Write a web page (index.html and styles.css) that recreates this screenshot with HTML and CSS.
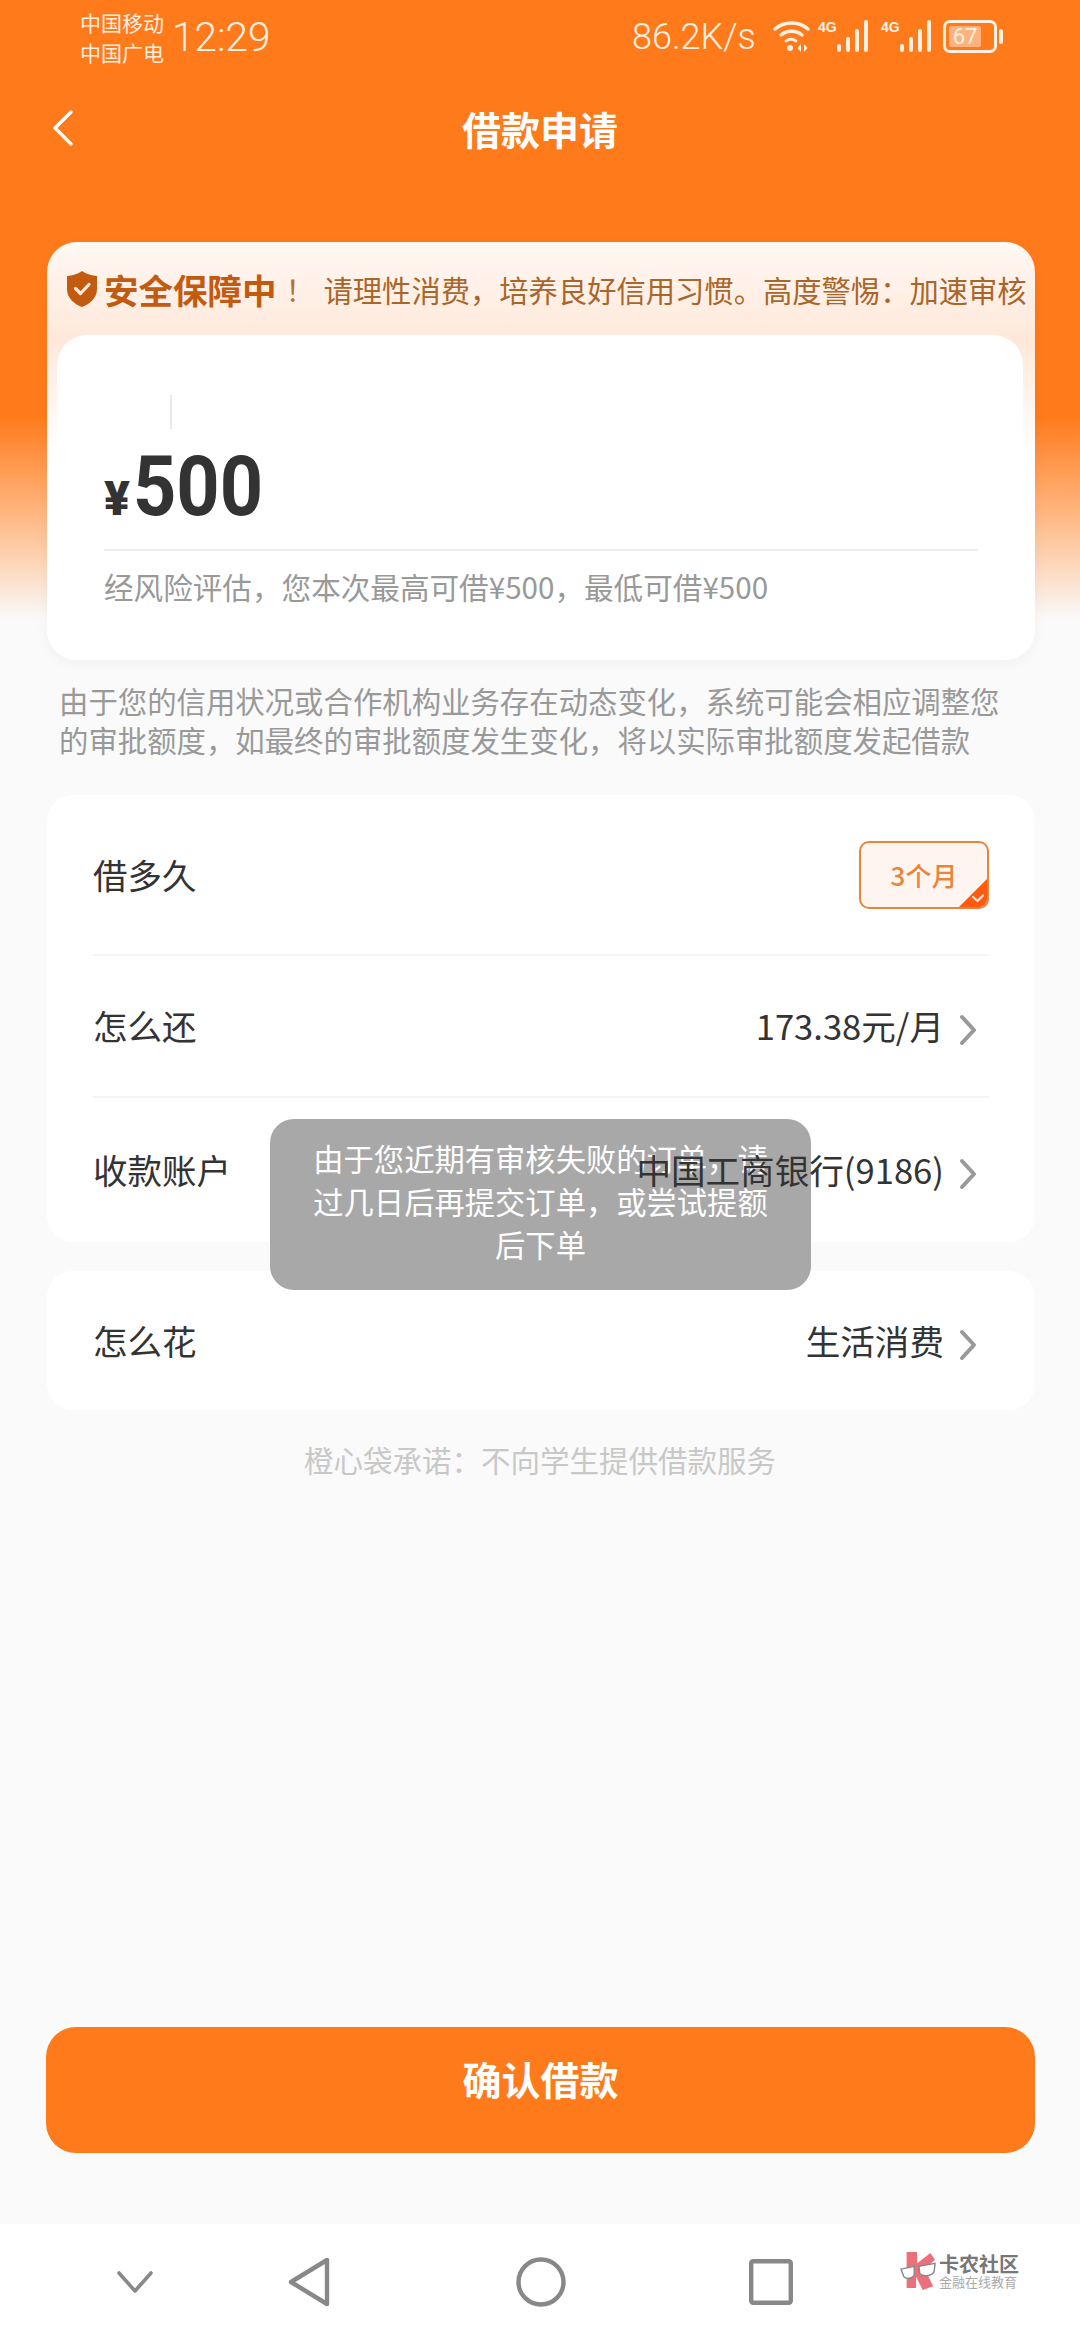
FILE: index.html
```html
<!DOCTYPE html>
<html lang="zh">
<head>
<meta charset="utf-8">
<title>借款申请</title>
<link rel="stylesheet" href="styles.css">
</head>
<body>
<div class="page">
  <div class="status">
    <div class="carrier"><span>中国移动</span><span>中国广电</span></div>
    <div class="time">12:29</div>
    <div class="speed">86.2K/s</div>
    <svg class="wifi" width="37" height="32" viewBox="0 0 37 32" fill="none" stroke="#fff0e2" stroke-linecap="round">
      <path d="M2 9C11 1 26 1 35 9" stroke-width="3.4"/>
      <path d="M8 15C14 10 23 10 29 15" stroke-width="3.4"/>
      <path d="M13 21C16 19 20 19 23 21" stroke-width="3"/>
      <circle cx="17" cy="28" r="3" fill="#fff0e2" stroke="none"/>
      <path d="M28 24L24.5 28L28 32ZM31 24L34.500 28L31 32Z" fill="#fff0e2" stroke="none"/>
    </svg>
    <div class="signal first">
      <span class="net">4G</span>
      <svg width="32" height="33" viewBox="0 0 32 33" fill="#fff0e2"><rect x="0" y="24" width="4" height="8" rx="2"/><rect x="9" y="17" width="4" height="15" rx="2"/><rect x="18" y="9" width="4" height="23" rx="2"/><rect x="27" y="0" width="4" height="32" rx="2"/></svg>
    </div>
    <div class="signal second">
      <span class="net">4G</span>
      <svg width="32" height="33" viewBox="0 0 32 33" fill="#fff0e2"><rect x="0" y="24" width="4" height="8" rx="2"/><rect x="9" y="17" width="4" height="15" rx="2"/><rect x="18" y="9" width="4" height="23" rx="2"/><rect x="27" y="0" width="4" height="32" rx="2"/></svg>
    </div>
    <div class="battery"><div class="cell"><span class="level">67</span></div><div class="nub"></div></div>
  </div>

  <div class="topbar">
    <svg class="back" width="22" height="36" viewBox="0 0 22 36" fill="none" stroke="#fff" stroke-width="3.2" stroke-linecap="round" stroke-linejoin="round"><path d="M19 2L3 18L19 34"/></svg>
    <div class="title">借款申请</div>
  </div>

  <div class="amount-card">
    <div class="banner">
      <svg class="shield" width="32" height="36" viewBox="0 0 32 36"><path d="M16 0C20 3 26 4.500 31 5V18C31 27 24 33 16 36C8 33 1 27 1 18V5C6 4.500 12 3 16 0Z" fill="#c25a10"/><path d="M9.500 17.500L14.500 22.500L23 13.500" fill="none" stroke="#ffe9dc" stroke-width="3.200" stroke-linecap="round" stroke-linejoin="round"/></svg>
      <span class="safe">安全保障中</span>
      <span class="bang">！</span>
      <span class="notice">请理性消费，培养良好信用习惯。高度警惕：加速审核</span>
    </div>
    <div class="amount-inner">
      <div class="cursor"></div>
      <div class="amount"><span class="yen">¥</span><span class="num">500</span></div>
      <div class="hint">经风险评估，您本次最高可借¥500，最低可借¥500</div>
    </div>
  </div>

  <p class="desc">由于您的信用状况或合作机构业务存在动态变化，系统可能会相应调整您的审批额度，如最终的审批额度发生变化，将以实际审批额度发起借款</p>

  <div class="stage">
    <div class="card rows">
      <div class="row r1">
        <span class="label">借多久</span>
        <div class="term">3个月
          <svg class="tick" width="30" height="30" viewBox="0 0 30 30"><path d="M30 0V20C30 26 26 30 20 30H0Z" fill="#ff5a10"/><path d="M15 19L19.500 23L25 17.500" fill="none" stroke="#ffe9dc" stroke-width="2.200" stroke-linecap="round" stroke-linejoin="round"/></svg>
        </div>
      </div>
      <div class="row r2">
        <span class="label">怎么还</span>
        <div class="value"><span>173.38元/月</span><svg class="chev" width="18" height="32" viewBox="0 0 18 32" fill="none" stroke="#999" stroke-width="4" stroke-linecap="round" stroke-linejoin="round"><path d="M3 3L15 16L3 29"/></svg></div>
      </div>
      <div class="row r3">
        <span class="label">收款账户</span>
        <div class="value"><span>中国工商银行(9186)</span><svg class="chev" width="18" height="32" viewBox="0 0 18 32" fill="none" stroke="#999" stroke-width="4" stroke-linecap="round" stroke-linejoin="round"><path d="M3 3L15 16L3 29"/></svg></div>
      </div>
    </div>
    <div class="card use">
      <span class="label">怎么花</span>
      <div class="value"><span>生活消费</span><svg class="chev" width="18" height="32" viewBox="0 0 18 32" fill="none" stroke="#999" stroke-width="4" stroke-linecap="round" stroke-linejoin="round"><path d="M3 3L15 16L3 29"/></svg></div>
    </div>
    <div class="toast">由于您近期有审核失败的订单，请过几日后再提交订单，或尝试提额后下单</div>
  </div>

  <p class="promise">橙心袋承诺：不向学生提供借款服务</p>

  <div class="confirm">确认借款</div>

  <div class="navbar">
    <svg class="n-down" width="36" height="22" viewBox="0 0 36 22" fill="none" stroke="#888" stroke-width="3.600" stroke-linecap="round" stroke-linejoin="round"><path d="M2 2L18 20L34 2"/></svg>
    <svg class="n-back" width="42" height="50" viewBox="0 0 42 50" fill="none" stroke="#888" stroke-width="4.400" stroke-linejoin="round"><path d="M39 3V47L3 25Z"/></svg>
    <svg class="n-home" width="50" height="50" viewBox="0 0 50 50" fill="none" stroke="#888" stroke-width="4.400"><circle cx="25" cy="25" r="22.500"/></svg>
    <svg class="n-task" width="44" height="46" viewBox="0 0 44 46" fill="none" stroke="#888" stroke-width="4.400" stroke-linejoin="round"><rect x="2.200" y="2.200" width="39.600" height="41.600" rx="2"/></svg>
    <div class="logo">
      <svg width="36" height="38" viewBox="0 0 38 40"><path d="M7 0H18V12L32 1L37 8L26 18L35 36L24 40L17 26V38H7Z" fill="#ee6f7c"/><path d="M1 18L15 15V24C14 28 6 29 4 26ZM20 15L37 12L36 21C33 26 24 26 21 23Z" fill="#fff" stroke="#888" stroke-width="1.500"/></svg>
      <div class="logo-text"><span class="logo-main">卡农社区</span><span class="logo-sub">金融在线教育</span></div>
    </div>
  </div>
</div>
</body>
</html>
```

FILE: styles.css
```css
* { box-sizing: border-box; }
html, body { margin: 0; padding: 0; }
body {
  font-family: "Noto Sans CJK SC", "Noto Sans", Roboto, sans-serif;
  color: #333;
}
.page {
  width: 1080px;
  height: 2340px;
  display: flex;
  flex-direction: column;
  overflow: hidden;
  background: linear-gradient(#ff7a1a 0, #ff7a1a 415px, #ffba88 520px, #fafafa 620px, #fafafa 100%);
}

/* status bar */
.status {
  height: 76px;
  flex: none;
  display: flex;
  align-items: flex-start;
  color: #fff0e2;
  padding-left: 80px;
}
.carrier {
  display: flex;
  flex-direction: column;
  font-size: 21px;
  line-height: 30px;
  margin-top: 7px;
  width: 92px;
}
.time {
  font-family: Roboto, sans-serif;
  font-weight: 300;
  font-size: 40.500px;
  line-height: 44px;
  margin-top: 15px;
  width: 460px;
}
.speed {
  font-family: Roboto, sans-serif;
  font-weight: 300;
  font-size: 36px;
  line-height: 44px;
  margin-top: 15px;
  width: 141px;
}
.wifi { margin-top: 20px; }
.signal { display: flex; align-items: flex-start; margin-top: 20px; }
.signal.first { margin-left: 8px; }
.signal.second { margin-left: 12px; }
.net {
  font-family: "Liberation Sans", sans-serif;
  font-weight: 700;
  font-size: 14px;
  line-height: 14px;
  width: 19px;
}
.battery { display: flex; align-items: center; margin-left: 11px; margin-top: 20px; }
.cell {
  width: 54px;
  height: 33px;
  border: 3px solid #fff0e2;
  border-radius: 7px;
  padding: 3px;
  display: flex;
}
.level {
  width: 32px;
  background: #ffb27d;
  border-radius: 2px;
  color: #fff0e2;
  font-family: Roboto, sans-serif;
  font-size: 22px;
  line-height: 21px;
  text-align: center;
}
.nub { width: 4px; height: 15px; background: #fff0e2; border-radius: 2px; margin-left: 2px; }

/* top bar */
.topbar {
  height: 104px;
  flex: none;
  display: flex;
  align-items: center;
  padding-left: 52px;
}
.back { flex: none; }
.title {
  font-size: 39px;
  font-weight: 700;
  color: #fff;
  line-height: 54px;
  width: 100%;
  margin-left: -74px;
  text-align: center;
  padding-left: 52px;
}

/* amount card */
.amount-card {
  margin: 62px 45px 0 47px;
  height: 418px;
  flex: none;
  border-radius: 30px;
  overflow: hidden;
  background: linear-gradient(#fff8f4 0, #ffe8da 100px, #fff 210px);
  box-shadow: 0 4px 14px rgba(0, 0, 0, 0.04);
  display: flex;
  flex-direction: column;
}
.banner {
  height: 93px;
  flex: none;
  display: flex;
  align-items: center;
  padding: 0 7px 0 19px;
  white-space: nowrap;
  overflow: hidden;
}
.shield { flex: none; }
.safe {
  font-size: 34.500px;
  font-weight: 700;
  color: #c25a10;
  margin-left: 6px;
  flex: none;
}
.bang { font-size: 29px; color: #b4712f; width: 47px; flex: none; text-align: center; }
.notice { font-size: 29.300px; color: #a9662a; flex: none; }
.amount-inner {
  flex: 1;
  margin: 0 12px 0 10px;
  background: #fff;
  border-radius: 30px 30px 0 0;
  padding: 60px 45px 0 47px;
  display: flex;
  flex-direction: column;
}
.cursor { width: 2px; height: 34px; background: #e8e8e8; margin-left: 66px; flex: none; }
.amount {
  height: 122px;
  border-bottom: 2px solid #eee;
  display: flex;
  align-items: baseline;
  flex: none;
  font-family: Roboto, sans-serif;
  font-weight: 700;
  color: #333;
}
.yen { font-size: 48px; font-weight: 900; line-height: 116px; width: 29px; }
.num {
  display: inline-block;
  font-size: 84px;
  line-height: 116px;
  transform: scaleX(0.9);
  transform-origin: left center;
}
.hint {
  font-size: 29.600px;
  line-height: 40px;
  margin-top: 16px;
  color: #999;
  white-space: nowrap;
}

.desc {
  margin: 21px 78px 0 59px;
  font-size: 29.400px;
  line-height: 39px;
  color: #999;
  flex: none;
}

/* rows */
.stage {
  position: relative;
  margin: 36px 45px 0 47px;
  flex: none;
}
.card { background: #fff; border-radius: 26px; }
.rows { padding: 0 46px; height: 447px; }
.row { display: flex; justify-content: space-between; align-items: center; }
.r1 { height: 161px; border-bottom: 2px solid #f4f4f4; }
.r2 { height: 142px; border-bottom: 2px solid #f4f4f4; }
.r3 { height: 143px; }
.label { font-size: 34.500px; color: #333; line-height: 48px; margin-top: -2px; }
.term {
  width: 130px;
  height: 68px;
  border: 2px solid #e8853a;
  border-radius: 10px;
  background: #fff5f0;
  color: #e8853a;
  font-size: 26px;
  font-weight: 500;
  display: flex;
  align-items: center;
  justify-content: center;
  position: relative;
  overflow: hidden;
}
.tick { position: absolute; right: -1px; bottom: -1px; }
.value {
  display: flex;
  align-items: center;
  font-size: 34.600px;
  line-height: 48px;
  color: #333;
  position: relative;
  z-index: 2;
  margin-top: -2px;
}
.chev { margin-left: 15px; margin-right: 12px; margin-top: 10px; }
.use {
  margin-top: 29px;
  height: 139px;
  padding: 0 46px;
  display: flex;
  justify-content: space-between;
  align-items: center;
}
.toast {
  position: absolute;
  left: 223px;
  top: 324px;
  width: 541px;
  height: 171px;
  z-index: 1;
  background: #a8a8a8;
  border-radius: 24px;
  padding: 18px 40px 0;
  color: #fff;
  font-size: 30.300px;
  line-height: 43px;
  text-align: center;
}

.promise {
  margin: 27px 0 0;
  text-align: center;
  font-size: 29.500px;
  line-height: 44px;
  color: #c8c8c8;
  flex: none;
}
.confirm {
  margin: 546px 45px 0 46px;
  height: 126px;
  flex: none;
  border-radius: 30px;
  background: #ff7a1a;
  color: #fff;
  font-size: 39px;
  font-weight: 700;
  display: flex;
  align-items: center;
  justify-content: center;
  padding-bottom: 24px;
}

/* nav */
.navbar {
  margin-top: auto;
  height: 116px;
  flex: none;
  background: #fff;
  display: flex;
  align-items: center;
  padding-left: 117px;
}
.navbar svg { flex: none; }
.n-back { margin-left: 135px; }
.n-home { margin-left: 186px; }
.n-task { margin-left: 183px; }
.logo { margin-left: 107px; display: flex; align-items: center; margin-top: -22px; }
.logo-text { display: flex; flex-direction: column; margin-left: 3px; }
.logo-main { font-size: 20px; font-weight: 700; line-height: 20px; color: #777; white-space: nowrap; }
.logo-sub { font-size: 13px; line-height: 15px; color: #aaa; white-space: nowrap; }
```
